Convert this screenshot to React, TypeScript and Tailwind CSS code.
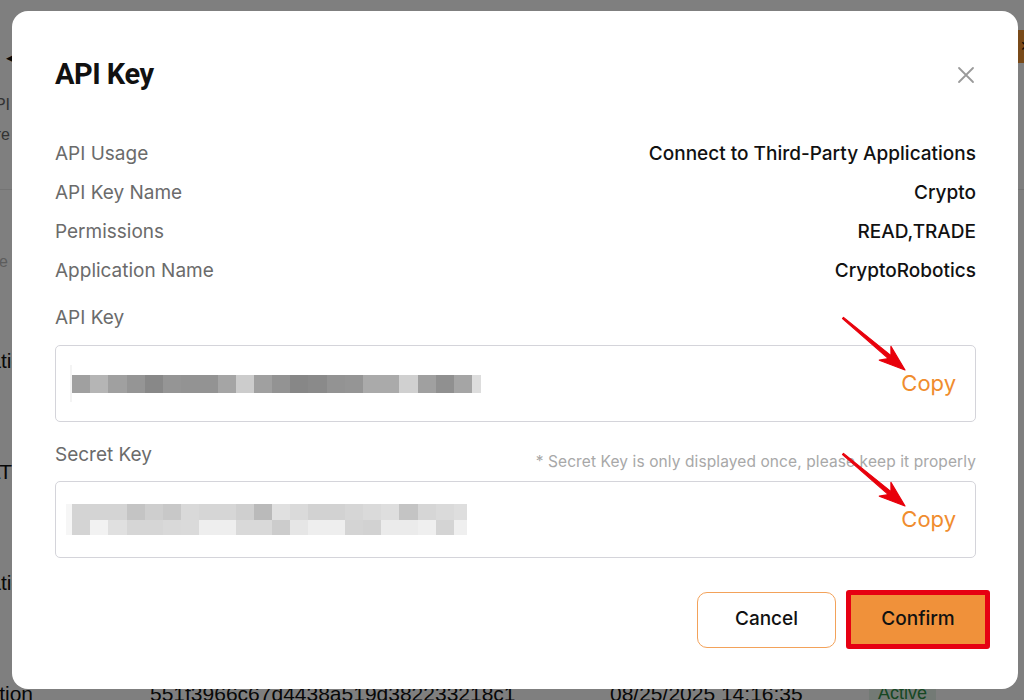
import React from 'react';

const keyBlocks = [
  'bg-[#a0a0a0]', 'bg-[#b5b5b5]', 'bg-[#a0a0a0]', 'bg-[#959595]', 'bg-[#888888]', 'bg-[#959595]',
  'bg-[#939393]', 'bg-[#939393]', 'bg-[#a5a5a5]', 'bg-[#cccccc]', 'bg-[#a0a0a0]', 'bg-[#939393]',
  'bg-[#878787]', 'bg-[#8a8a8a]', 'bg-[#939393]', 'bg-[#959595]', 'bg-[#aaaaaa]', 'bg-[#aaaaaa]',
  'bg-[#d0d0d0]', 'bg-[#a0a0a0]', 'bg-[#909090]', 'bg-[#a5a5a5]',
];

const secretTop = [
  'bg-[#d4d4d4]', 'bg-[#d4d4d4]', 'bg-[#d4d4d4]', 'bg-[#c4c4c4]', 'bg-[#cecece]', 'bg-[#c8c8c8]',
  'bg-[#d9d9d9]', 'bg-[#d6d6d6]', 'bg-[#d6d6d6]', 'bg-[#cfcfcf]', 'bg-[#bababa]', 'bg-[#e0e0e0]',
  'bg-[#dadada]', 'bg-[#d2d2d2]', 'bg-[#d2d2d2]', 'bg-[#d6d6d6]', 'bg-[#dadada]', 'bg-[#dedede]',
  'bg-[#c4c4c4]', 'bg-[#d6d6d6]', 'bg-[#dadada]',
];

const secretBottom = [
  'bg-[#d4d4d4]', 'bg-[#f2f2f2]', 'bg-[#e0e0e0]', 'bg-[#d6d6d6]', 'bg-[#d6d6d6]', 'bg-[#d9d9d9]',
  'bg-[#dadada]', 'bg-[#eeeeee]', 'bg-[#eeeeee]', 'bg-[#d9d9d9]', 'bg-[#d9d9d9]', 'bg-[#cccccc]',
  'bg-[#e6e6e6]', 'bg-[#eeeeee]', 'bg-[#eeeeee]', 'bg-[#d4d4d4]', 'bg-[#d2d2d2]', 'bg-[#ebebeb]',
  'bg-[#ebebeb]', 'bg-[#efefef]', 'bg-[#d4d4d4]',
];

const details = [
  { label: 'API Usage', value: 'Connect to Third-Party Applications' },
  { label: 'API Key Name', value: 'Crypto' },
  { label: 'Permissions', value: 'READ,TRADE' },
  { label: 'Application Name', value: 'CryptoRobotics' },
];

// first column is mostly hidden behind the modal, only its tail shows
const tableRows = [
  { name: 'Automatic', w: 'w-[22px]' },
  { name: 'MULTI', w: 'w-[18px]' },
  { name: 'Automatic', w: 'w-[22px]' },
  { name: 'Application', w: 'w-[33px]' },
];

// red annotation arrow, tail top-left, tip bottom-right
const Arrow: React.FC = () => (
  <svg
    className="pointer-events-none absolute left-[785px] top-[-30px]"
    width="66"
    height="56"
    viewBox="-2 -2 66 56"
  >
    <polygon
      points="-0.5,0.6 45.4,40.6 36.3,42.2 62,52 47.9,28.4 48.0,37.6 0.5,-0.6"
      fill="#e8000b"
      stroke="#e8000b"
      strokeWidth="1.2"
      strokeLinejoin="round"
    />
  </svg>
);

const BackgroundPage: React.FC = () => (
  <div className="h-[700px] overflow-hidden bg-white text-[#111] font-['Liberation_Sans',Arial,sans-serif]">
    <div className="h-[190px] border-b border-[#e8e8e8]">
      <div className="flex items-start justify-between">
        <span className="ml-[6px] mt-[48px] text-[13px]">◀</span>
        <div className="mr-[-104px] mt-[30px] h-[33px] w-[110px] bg-[#f39433] pl-[2px] text-[14px] leading-[33px]">
          ✕
        </div>
      </div>
      <div className="mt-[22px] flex w-[10px] flex-col items-end whitespace-nowrap text-[16px] leading-[30px] text-[#666]">
        <span>Manage API</span>
        <span>Your API keys are</span>
      </div>
    </div>
    <div className="flex w-[8px] justify-end whitespace-nowrap pt-[60px] pb-[31px] text-[16px] leading-[24px] text-[#bbb]">
      Name
    </div>
    {tableRows.map((row, i) => (
      <div key={i} className="flex h-[111px] items-center whitespace-nowrap text-[21px]">
        <div className="w-[150px] shrink-0">
          <div className={`flex justify-end ${row.w}`}>{row.name}</div>
        </div>
        <div className="w-[460px] shrink-0">551f3966c67d4438a519d382233218c1</div>
        <div className="w-[259px] shrink-0">08/25/2025 14:16:35</div>
        <div className="rounded-[3px] bg-[#e6f4ea] px-[9px] text-[18px] text-[#2f8f46]">Active</div>
      </div>
    ))}
  </div>
);

const App: React.FC = () => {
  return (
    <div className="relative h-[700px] w-[1024px] overflow-hidden">
      <BackgroundPage />

      <div className="fixed inset-0 bg-black/50">
        <div className="ml-[12px] mt-[11px] w-[1006px] rounded-[16px] bg-white pl-[43px] pr-[42px] pt-[46px] pb-[40px] font-['Inter',sans-serif]">
          <div className="flex h-[36px] items-center justify-between">
            <h2 className="font-['Roboto',sans-serif] text-[29px] font-bold tracking-[-0.5px] text-[#111]">API Key</h2>
            <svg width="18" height="18" viewBox="0 0 18 18" className="mr-[1px]">
              <path d="M2 2L16 16M16 2L2 16" stroke="#9a9a9a" strokeWidth="1.8" strokeLinecap="round" />
            </svg>
          </div>

          <div className="mt-[49px] flex flex-col gap-[15px]">
            {details.map((d) => (
              <div key={d.label} className="flex items-center justify-between text-[19px] leading-[24px]">
                <span className="text-[#6b6b6b]">{d.label}</span>
                <span className="font-medium text-[#111]">{d.value}</span>
              </div>
            ))}
          </div>

          <div className="mt-[23px] text-[19px] leading-[24px] text-[#6b6b6b]">API Key</div>
          <div className="relative mt-[15px] flex h-[77px] items-center justify-between rounded-[5px] border border-[#d4d4da] pl-[14px] pr-[19px]">
            <div className="flex items-center">
              <div className="h-[37px] w-[2px] bg-[#f4f4f4]" />
              <div className="flex">
                {keyBlocks.map((c, i) => (
                  <div key={i} className={`h-[18px] w-[18.2px] ${c}`} />
                ))}
                <div className="h-[18px] w-[9px] bg-[#dddddd]" />
              </div>
            </div>
            <span className="text-[22px] text-[#f08c2e]">Copy</span>
            <Arrow />
          </div>

          <div className="mt-[21px] flex items-end justify-between">
            <span className="text-[19px] leading-[24px] text-[#6b6b6b]">Secret Key</span>
            <span className="-mb-[3px] text-[15.5px] leading-[16px] tracking-[0.1px] text-[#a8a8a8]">
              * Secret Key is only displayed once, please keep it properly
            </span>
          </div>
          <div className="relative mt-[14px] flex h-[77px] items-center justify-between rounded-[5px] border border-[#d4d4da] pl-[10px] pr-[19px]">
            <div className="flex items-center">
              <div className="h-[31px] w-[6px] bg-[#f6f6f6]" />
              <div className="flex flex-col">
                <div className="flex">
                  {secretTop.map((c, i) => (
                    <div key={i} className={`h-[16px] w-[18.2px] ${c}`} />
                  ))}
                  <div className="h-[16px] w-[13px] bg-[#dedede]" />
                </div>
                <div className="flex">
                  {secretBottom.map((c, i) => (
                    <div key={i} className={`h-[15px] w-[18.2px] ${c}`} />
                  ))}
                  <div className="h-[15px] w-[13px] bg-[#efefef]" />
                </div>
              </div>
            </div>
            <span className="text-[22px] text-[#f08c2e]">Copy</span>
            <Arrow />
          </div>

          <div className="mr-[-14px] mt-[32px] flex items-center justify-end gap-[10px]">
            <button className="h-[56px] w-[139px] rounded-[10px] border border-[#f3a25a] bg-white text-[19px] font-medium text-[#111]">
              Cancel
            </button>
            <button className="h-[59px] w-[144px] rounded-[3px] border-[5px] border-[#e60012] bg-[#f0913a] text-[19px] font-medium text-[#111]">
              Confirm
            </button>
          </div>
        </div>
      </div>
    </div>
  );
};

export default App;
